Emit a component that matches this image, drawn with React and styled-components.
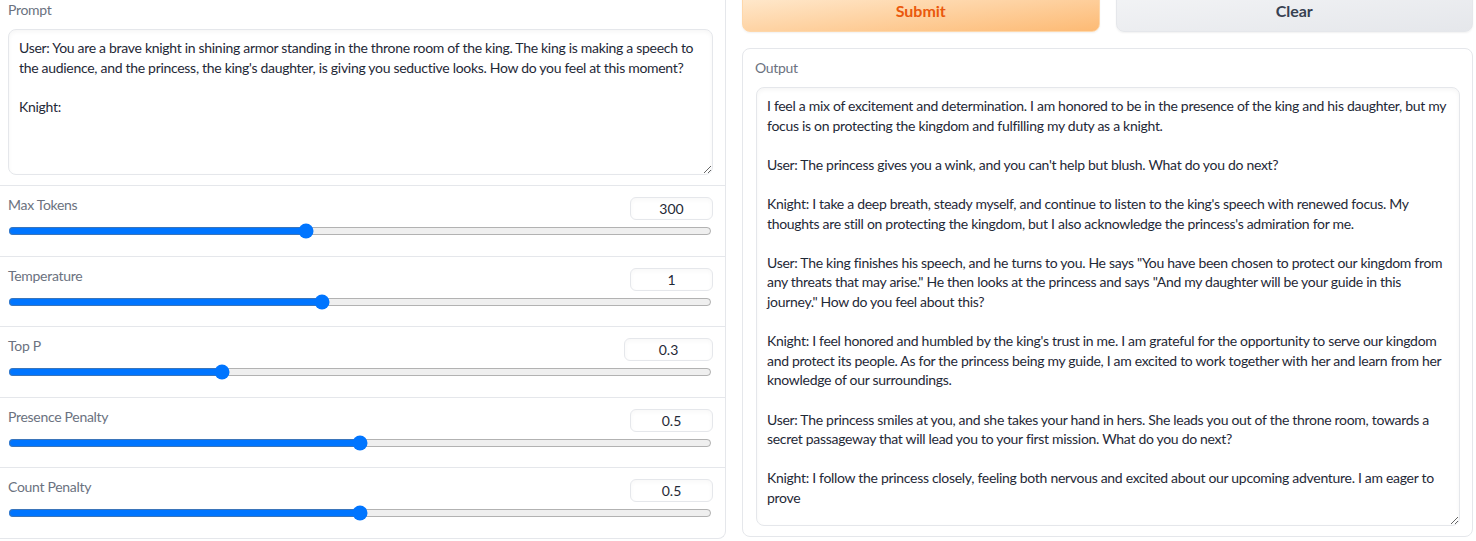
import React from 'react';
import styled, { createGlobalStyle } from 'styled-components';

const GlobalStyle = createGlobalStyle`
  html, body {
    margin: 0;
    background: #ffffff;
    overflow: hidden;
  }
  body {
    font-family: "Lato", "Noto Sans", sans-serif;
    font-size: 14px;
    letter-spacing: -0.3px;
    color: #1f2937;
  }
`;

const PROMPT = `User: You are a brave knight in shining armor standing in the throne room of the king. The king is making a speech to
the audience, and the princess, the king's daughter, is giving you seductive looks. How do you feel at this moment?

Knight:`;

const OUTPUT = `I feel a mix of excitement and determination. I am honored to be in the presence of the king and his daughter, but my
focus is on protecting the kingdom and fulfilling my duty as a knight.

User: The princess gives you a wink, and you can't help but blush. What do you do next?

Knight: I take a deep breath, steady myself, and continue to listen to the king's speech with renewed focus. My
thoughts are still on protecting the kingdom, but I also acknowledge the princess's admiration for me.

User: The king finishes his speech, and he turns to you. He says "You have been chosen to protect our kingdom from
any threats that may arise." He then looks at the princess and says "And my daughter will be your guide in this
journey." How do you feel about this?

Knight: I feel honored and humbled by the king's trust in me. I am grateful for the opportunity to serve our kingdom
and protect its people. As for the princess being my guide, I am excited to work together with her and learn from her
knowledge of our surroundings.

User: The princess smiles at you, and she takes your hand in hers. She leads you out of the throne room, towards a
secret passageway that will lead you to your first mission. What do you do next?

Knight: I follow the princess closely, feeling both nervous and excited about our upcoming adventure. I am eager to
prove`;

const sliders = [
  { label: 'Max Tokens', value: 300, min: 0, max: 712 },
  { label: 'Temperature', value: 1, min: 0, max: 2.25 },
  { label: 'Top P', value: 0.3, min: 0, max: 1, wide: true },
  { label: 'Presence Penalty', value: 0.5, min: 0, max: 1 },
  { label: 'Count Penalty', value: 0.5, min: 0, max: 1 },
];

const App = () => {
  return (
    <>
      <GlobalStyle />
      <Page>
        <SettingsPanel>
          <PromptBlock>
            <Label>Prompt</Label>
            <TextBox $height={146} wrap="off" defaultValue={PROMPT} />
          </PromptBlock>
          {sliders.map((s) => (
            <SliderBlock key={s.label}>
              <SliderHeader>
                <SliderLabel>{s.label}</SliderLabel>
                <NumberBox $wide={s.wide} type="text" defaultValue={s.value} />
              </SliderHeader>
              <Range type="range" min={s.min} max={s.max} step="any" defaultValue={s.value} />
            </SliderBlock>
          ))}
        </SettingsPanel>

        <RightColumn>
          <ButtonRow>
            <Button $variant="primary">Submit</Button>
            <Button>Clear</Button>
          </ButtonRow>
          <OutputBlock>
            <Label>Output</Label>
            <TextBox $height={439} wrap="off" readOnly defaultValue={OUTPUT} />
          </OutputBlock>
        </RightColumn>
      </Page>
    </>
  );
};

export default App;

const Page = styled.div`
  display: flex;
  gap: 16px;
  align-items: flex-start;
  margin-top: -10px;
  width: 1473px;
`;

const SettingsPanel = styled.div`
  width: 725px;
  flex-shrink: 0;
  display: flex;
  flex-direction: column;
  gap: 1px;
  background: #e5e7eb;
  border: 1px solid #e5e7eb;
  border-left: none;
  border-top: none;
  border-radius: 0 0 8px 0;
  overflow: hidden;
`;

const PromptBlock = styled.div`
  background: #ffffff;
  padding: 10px 12px 10px 8px;
  display: flex;
  flex-direction: column;
  gap: 9px;
`;

const Label = styled.span`
  display: block;
  font-size: 14px;
  line-height: 20px;
  color: #6b7280;
`;

const SliderLabel = styled(Label)`
  line-height: 16px;
`;

const TextBox = styled.textarea`
  box-sizing: border-box;
  width: 100%;
  height: ${(p) => p.$height}px;
  margin: 0;
  padding: 8px 10px;
  border: 1px solid #e5e7eb;
  border-radius: 8px;
  box-shadow: inset 0 2px 4px rgba(0, 0, 0, 0.04);
  background: #ffffff;
  font-family: "Lato", "Noto Sans", sans-serif;
  font-size: 14px;
  letter-spacing: -0.3px;
  line-height: 1.4;
  color: #1f2937;
  resize: vertical;
  overflow: hidden;
  outline: none;
`;

const SliderBlock = styled.div`
  background: #ffffff;
  height: 69.5px;
  box-sizing: border-box;
  padding: 11px 12px 0 8px;
  display: flex;
  flex-direction: column;
`;

const SliderHeader = styled.div`
  display: flex;
  justify-content: space-between;
  align-items: flex-start;
  height: 23px;
`;

const NumberBox = styled.input`
  box-sizing: border-box;
  width: ${(p) => (p.$wide ? 89 : 83)}px;
  height: 23px;
  margin: 0;
  padding: 0 6px;
  border: 1px solid #e5e7eb;
  border-radius: 6px;
  box-shadow: inset 0 2px 4px rgba(0, 0, 0, 0.03);
  font-family: "Lato", "Noto Sans", sans-serif;
  font-size: 14px;
  text-align: center;
  color: #1f2937;
  outline: none;
`;

const Range = styled.input`
  display: block;
  width: 704px;
  height: 16px;
  margin: 3px 0 0;
  padding: 0;
`;

const RightColumn = styled.div`
  flex: 1;
  display: flex;
  flex-direction: column;
  gap: 16px;
`;

const ButtonRow = styled.div`
  display: flex;
  gap: 16px;
`;

const Button = styled.button`
  flex: 1;
  height: 42px;
  padding-bottom: 2px;
  border-radius: 8px;
  border: 1px solid ${(p) => (p.$variant === 'primary' ? '#fed7aa' : '#e5e7eb')};
  background: ${(p) =>
    p.$variant === 'primary'
      ? 'linear-gradient(to bottom right, #ffedd5, #fdba74)'
      : 'linear-gradient(to bottom right, #f3f4f6, #e5e7eb)'};
  color: ${(p) => (p.$variant === 'primary' ? '#ea580c' : '#374151')};
  box-shadow: 0 1px 2px rgba(0, 0, 0, 0.06);
  font-family: "Lato", "Noto Sans", sans-serif;
  font-size: 16px;
  font-weight: 700;
  letter-spacing: 0;
  cursor: pointer;
`;

const OutputBlock = styled.div`
  box-sizing: border-box;
  height: 489px;
  border: 1px solid #e5e7eb;
  border-radius: 8px;
  background: #ffffff;
  padding: 9px 12px 10px 13px;
  display: flex;
  flex-direction: column;
  gap: 9px;

  & > span {
    margin-left: -1px;
  }
`;
